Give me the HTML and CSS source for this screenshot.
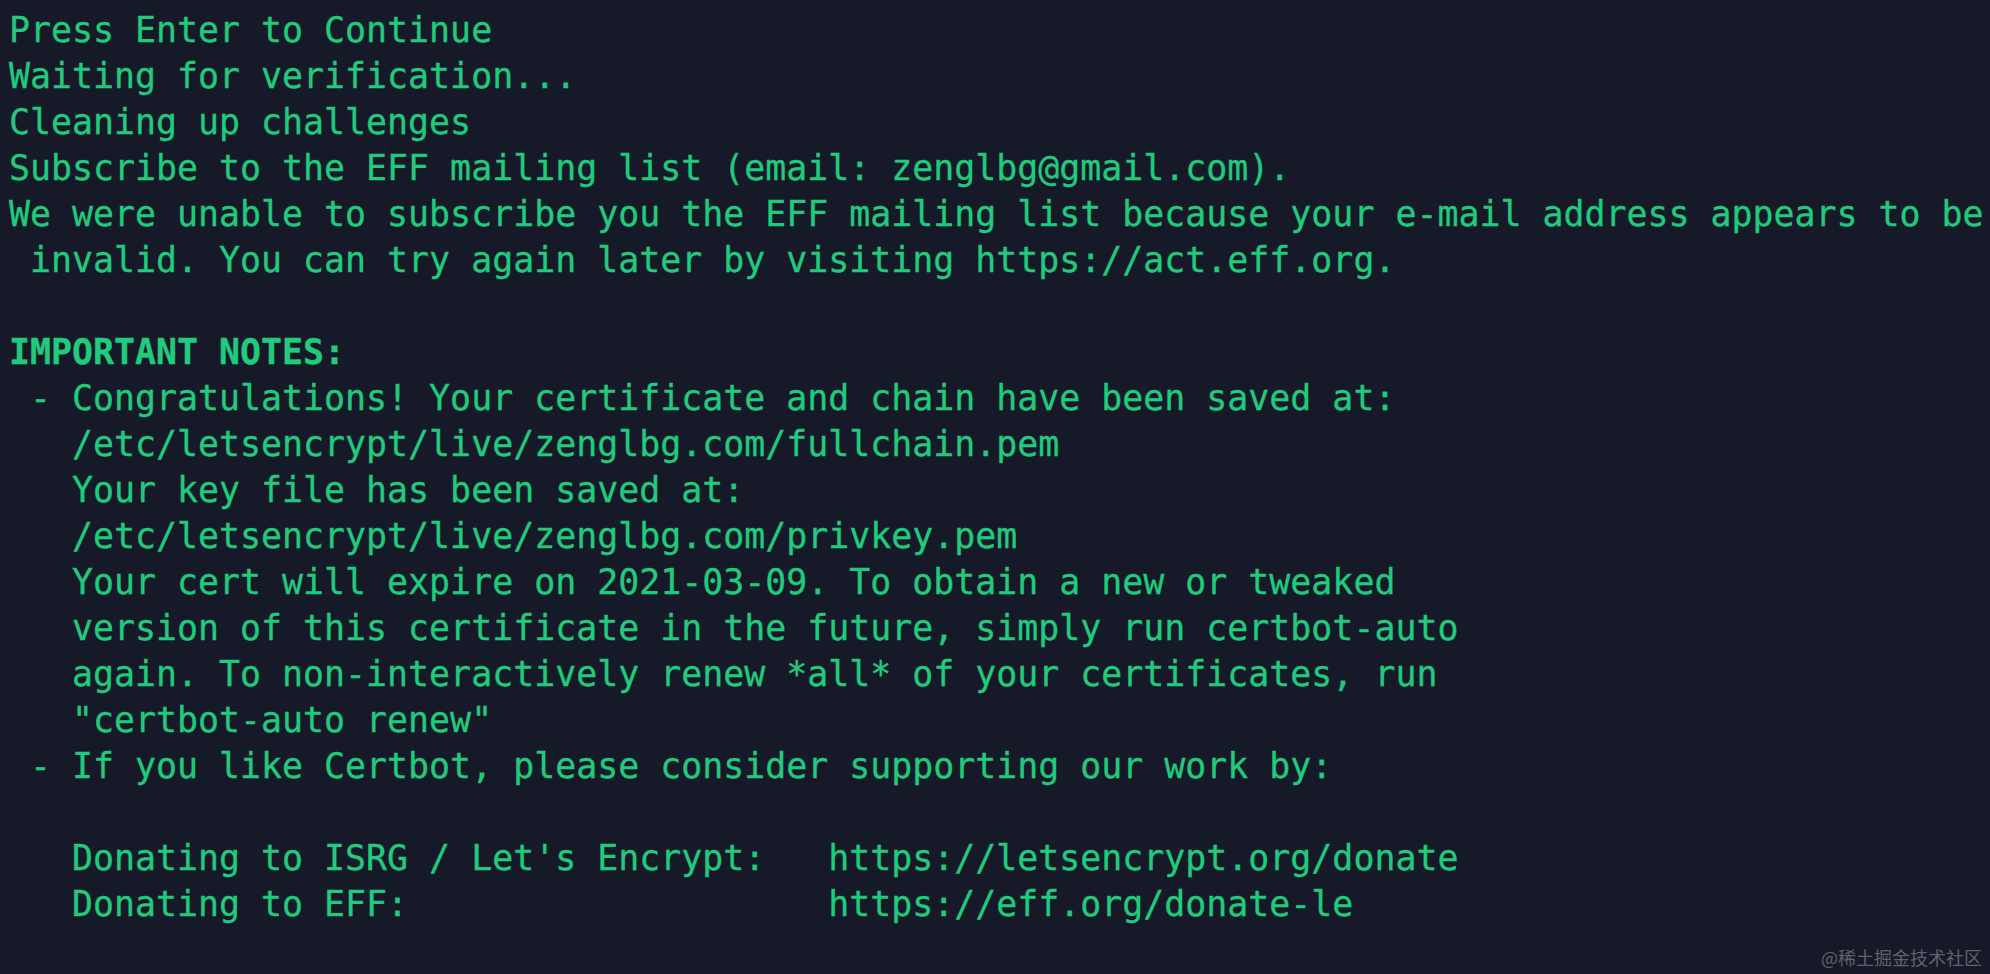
FILE: index.html
```html
<!DOCTYPE html>
<html lang="en">
<head>
<meta charset="utf-8">
<title>certbot output</title>
<link rel="stylesheet" href="styles.css">
</head>
<body>
<main class="terminal">
<pre class="output">Press Enter to Continue
Waiting for verification...
Cleaning up challenges
Subscribe to the EFF mailing list (email: zenglbg@gmail.com).
We were unable to subscribe you the EFF mailing list because your e-mail address appears to be
 invalid. You can try again later by visiting https://act.eff.org.

<b class="strong">IMPORTANT NOTES:</b>
 - Congratulations! Your certificate and chain have been saved at:
   /etc/letsencrypt/live/zenglbg.com/fullchain.pem
   Your key file has been saved at:
   /etc/letsencrypt/live/zenglbg.com/privkey.pem
   Your cert will expire on 2021-03-09. To obtain a new or tweaked
   version of this certificate in the future, simply run certbot-auto
   again. To non-interactively renew *all* of your certificates, run
   "certbot-auto renew"
 - If you like Certbot, please consider supporting our work by:

   Donating to ISRG / Let's Encrypt:   https://letsencrypt.org/donate
   Donating to EFF:                    https://eff.org/donate-le</pre>
<div class="watermark">@稀土掘金技术社区</div>
</main>
</body>
</html>
```

FILE: styles.css
```css
html, body {
  margin: 0;
  padding: 0;
  height: 100%;
  background: #161a28;
}

.terminal {
  position: relative;
  height: 100%;
  box-sizing: border-box;
  padding: 7px 0 0 9px;
  overflow: hidden;
}

.output {
  margin: 0;
  font-family: "DejaVu Sans Mono", "Liberation Mono", monospace;
  font-size: 34.9px;
  line-height: 46px;
  color: #20cb7e;
  -webkit-text-stroke: 0.3px #20cb7e;
  white-space: pre;
}

.strong {
  font-weight: bold;
}

.watermark {
  position: absolute;
  right: 8px;
  bottom: 6px;
  font-family: "Noto Sans CJK SC", sans-serif;
  font-size: 18px;
  line-height: 22px;
  color: #5f636e;
}
```
